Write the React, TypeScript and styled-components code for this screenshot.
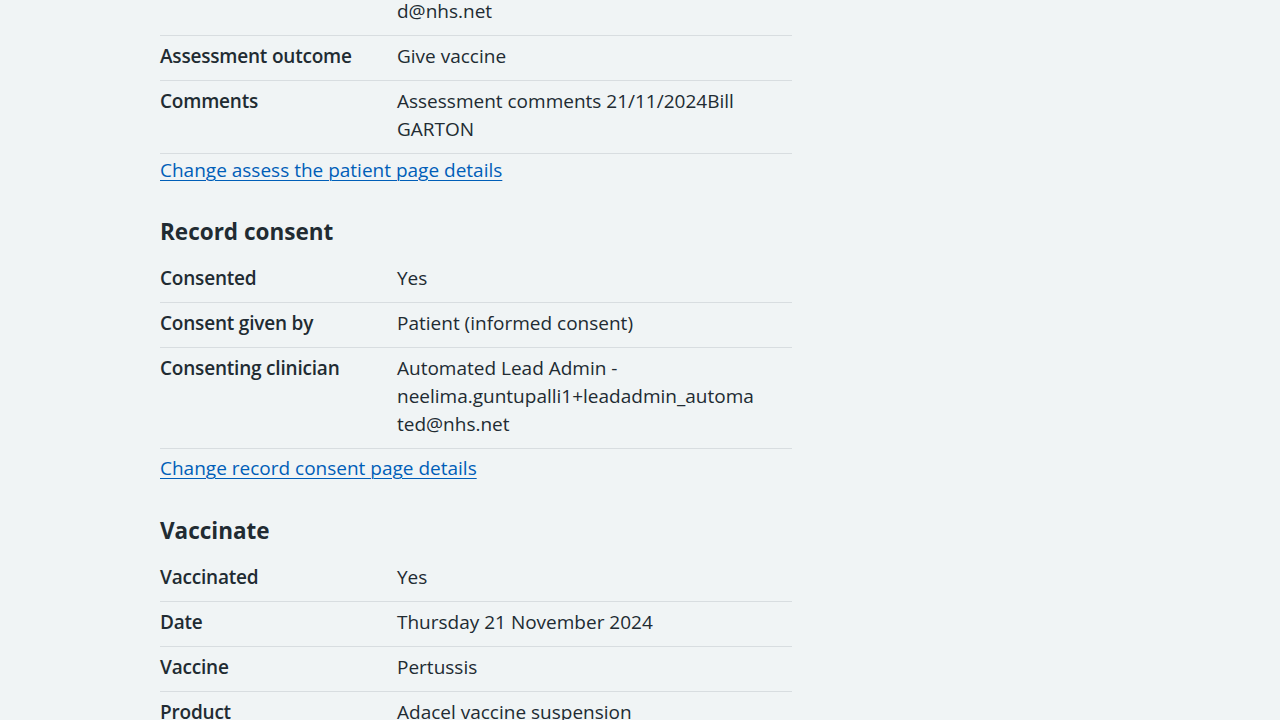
import React from 'react';
import styled, { createGlobalStyle } from 'styled-components';

const GlobalStyle = createGlobalStyle`
  html, body {
    margin: 0;
    padding: 0;
    background: #f0f4f5;
  }

  body {
    color: #212b32;
    font-family: 'Open Sans', 'Liberation Sans', Arial, sans-serif;
    -webkit-font-smoothing: antialiased;
  }
`;

const Viewport = styled.div`
  height: 100vh;
  overflow: hidden;
`;

const WidthContainer = styled.div`
  margin: 0 auto;
  max-width: 960px;
`;

// the page is scrolled part way down the check-and-confirm screen
const Column = styled.main`
  margin-top: -65px;
  width: 632px;
`;

const SummaryList = styled.dl`
  margin: 0;
  font-size: 19px;
  line-height: 28px;
`;

const Row = styled.div`
  border-bottom: 1px solid #d8dde0;
  display: grid;
  grid-template-columns: 237px 1fr;
`;

const Key = styled.dt`
  font-weight: 600;
  letter-spacing: -0.2px;
  padding: 6px 24px 10px 0;
`;

const Value = styled.dd`
  margin: 0;
  padding: 6px 24px 10px 0;
`;

const LinkParagraph = styled.p<{ $top: number; $bottom: number }>`
  font-size: 19px;
  line-height: 28px;
  margin: ${(p) => p.$top}px 0 ${(p) => p.$bottom}px;
`;

const ChangeLink = styled.a`
  color: #005eb8;
  text-decoration: underline;
  text-decoration-thickness: 1px;
  text-underline-offset: 3px;
`;

const SectionHeading = styled.h2`
  font-size: 22.5px;
  font-weight: 700;
  line-height: 32px;
  margin: 0 0 10px;
  padding-top: 3px;
`;

interface Item {
  label: string;
  value: React.ReactNode;
}

interface SectionProps {
  title?: string;
  items: Item[];
  linkText?: string;
  linkTop?: number;
  linkBottom?: number;
}

function Section ({ items, linkBottom = 33, linkText, linkTop = 0, title }: SectionProps): React.ReactElement<SectionProps> {
  return (
    <section>
      {title && <SectionHeading>{title}</SectionHeading>}
      <SummaryList>
        {items.map((item) => (
          <Row key={item.label}>
            <Key>{item.label}</Key>
            <Value>{item.value}</Value>
          </Row>
        ))}
      </SummaryList>
      {linkText && (
        <LinkParagraph $bottom={linkBottom} $top={linkTop}>
          <ChangeLink href='#'>{linkText}</ChangeLink>
        </LinkParagraph>
      )}
    </section>
  );
}

const assessItems: Item[] = [
  {
    label: 'Assessing clinician',
    value: (
      <>
        Automated Lead Admin -<br />
        neelima.guntupalli1+leadadmin_automate<br />
        d@nhs.net
      </>
    )
  },
  { label: 'Assessment outcome', value: 'Give vaccine' },
  { label: 'Comments', value: 'Assessment comments 21/11/2024Bill GARTON' }
];

const consentItems: Item[] = [
  { label: 'Consented', value: 'Yes' },
  { label: 'Consent given by', value: 'Patient (informed consent)' },
  {
    label: 'Consenting clinician',
    value: (
      <>
        Automated Lead Admin - neelima.guntupalli1+leadadmin_automa<wbr />ted@nhs.net
      </>
    )
  }
];

const vaccinateItems: Item[] = [
  { label: 'Vaccinated', value: 'Yes' },
  { label: 'Date', value: 'Thursday 21 November 2024' },
  { label: 'Vaccine', value: 'Pertussis' },
  { label: 'Product', value: 'Adacel vaccine suspension' }
];

export default function App (): React.ReactElement {
  return (
    <Viewport>
      <GlobalStyle />
      <WidthContainer>
        <Column>
          <Section
            items={assessItems}
            linkBottom={29}
            linkText='Change assess the patient page details'
            linkTop={2}
          />
          <Section
            items={consentItems}
            linkBottom={30}
            linkText='Change record consent page details'
            linkTop={5}
            title='Record consent'
          />
          <Section
            items={vaccinateItems}
            title='Vaccinate'
          />
        </Column>
      </WidthContainer>
    </Viewport>
  );
}
